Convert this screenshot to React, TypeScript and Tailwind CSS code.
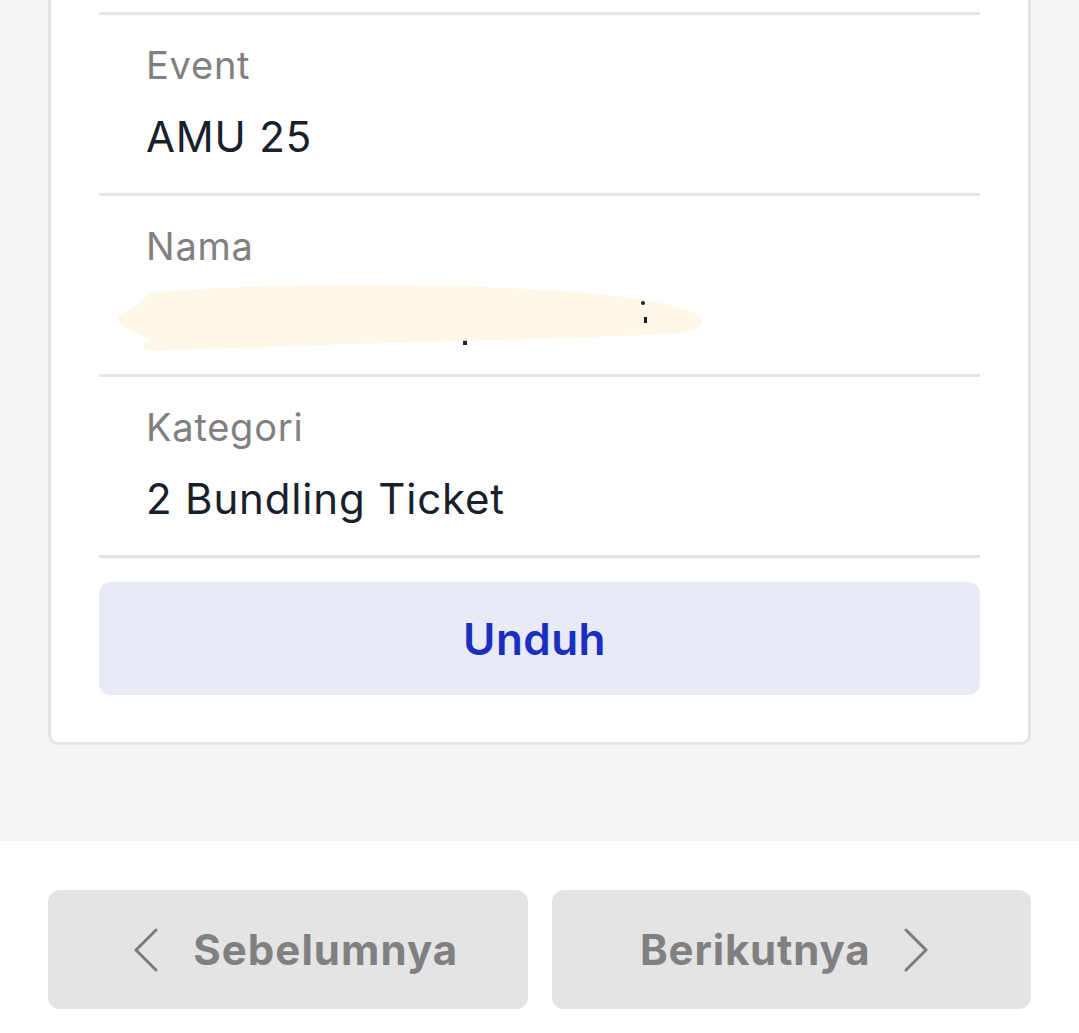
import { ReactNode } from "react";

function Row({ label, children }: { label: string; children: ReactNode }) {
  return (
    <div className="border-b-[3px] border-[#e4e4e4] pt-[27px] pb-[31px] pl-[47px]">
      <div className="text-[38px] leading-[46px] tracking-[0.02em] text-[#808080]">{label}</div>
      <div className="mt-[24px] h-[50px] text-[42px] leading-[50px] tracking-[0.02em] text-[#18202b] relative">
        {children}
      </div>
    </div>
  );
}

function Redacted() {
  // scribble covering the name
  return (
    <svg
      className="absolute left-[-35px] top-[-12px]"
      width="600"
      height="82"
      viewBox="0 0 600 82"
    >
      <rect x="40" y="38" width="6" height="10" fill="#1a202c" />
      <rect x="528" y="26" width="3" height="10" fill="#1a202c" />
      <rect x="352" y="58" width="4" height="6" fill="#1a202c" />
      <path
        d="M 38 12 C 120 3, 300 2, 420 8 C 500 12, 560 22, 578 30 C 600 38, 595 50, 560 53 C 450 58, 250 62, 42 70 C 28 70, 30 62, 40 58 C 18 50, 0 40, 10 33 C 25 27, 30 20, 38 12 Z"
        fill="#fff8e8"
      />
      <rect x="530" y="20" width="4" height="4" rx="2" fill="#1a202c" />
      <rect x="533" y="36" width="3" height="6" fill="#1a202c" />
    </svg>
  );
}

function Chevron({ dir }: { dir: "left" | "right" }) {
  return (
    <svg width="26" height="44" viewBox="0 0 26 44" fill="none">
      <polyline
        points={dir === "left" ? "23,2 3,22 23,42" : "3,2 23,22 3,42"}
        stroke="#7b7b7b"
        strokeWidth="3"
        strokeLinecap="round"
        strokeLinejoin="round"
      />
    </svg>
  );
}

export default function App() {
  return (
    <div className="min-h-screen bg-white" style={{ fontFamily: "Inter, 'Noto Sans', sans-serif" }}>
      {/* Ticket detail */}
      <div className="bg-[#f4f4f4] px-[48px] pb-[96px]">
        <div className="bg-white border-x-[3px] border-b-[3px] border-[#e4e4e4] rounded-b-[10px] pt-[12px] px-[48px] pb-[47px]">
          <div className="border-t-[3px] border-[#e4e4e4]" />
          <Row label="Event">AMU 25</Row>
          <Row label="Nama">
            <Redacted />
          </Row>
          <Row label="Kategori">2 Bundling Ticket</Row>
          <button className="mt-[24px] w-full h-[113px] rounded-[12px] bg-[#e8eaf6] text-[44px] font-semibold tracking-[0.01em] text-[#1a2fbf] flex items-center justify-center pr-[10px]">
            Unduh
          </button>
        </div>
      </div>

      {/* Pager */}
      <div className="bg-white px-[48px] pt-[49px] grid grid-cols-2 gap-[24px]">
        <button className="h-[119px] rounded-[12px] bg-[#e4e4e4] flex items-center justify-center gap-[34px] text-[42px] font-bold tracking-[0.025em] text-[#808080] pl-[16px]">
          <Chevron dir="left" />
          <span>Sebelumnya</span>
        </button>
        <button className="h-[119px] rounded-[12px] bg-[#e4e4e4] flex items-center justify-center gap-[32px] text-[42px] font-bold tracking-[0.02em] text-[#808080] pr-[14px]">
          <span>Berikutnya</span>
          <Chevron dir="right" />
        </button>
      </div>
    </div>
  );
}
